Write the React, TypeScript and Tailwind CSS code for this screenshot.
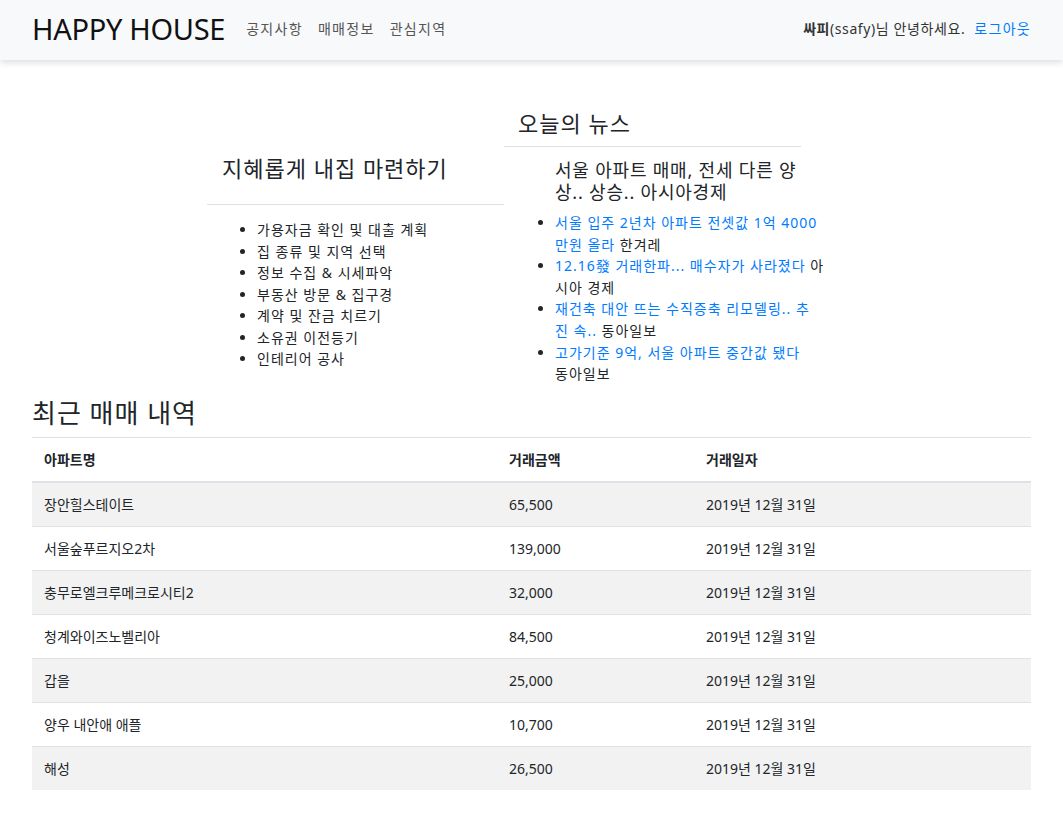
const guide = [
  "가용자금 확인 및 대출 계획",
  "집 종류 및 지역 선택",
  "정보 수집 & 시세파악",
  "부동산 방문 & 집구경",
  "계약 및 잔금 치르기",
  "소유권 이전등기",
  "인테리어 공사",
];

// lines split the way the original wraps them
const news = [
  { title: ["서울 입주 2년차 아파트 전셋값 1억 4000", "만원 올라"], press: "한겨레", pressNewLine: false },
  { title: ["12.16發 거래한파... 매수자가 사라졌다"], press: "아|시아 경제", pressNewLine: false },
  { title: ["재건축 대안 뜨는 수직증축 리모델링.. 추", "진 속.."], press: "동아일보", pressNewLine: false },
  { title: ["고가기준 9억, 서울 아파트 중간값 됐다"], press: "동아일보", pressNewLine: true },
];

const deals = [
  { name: "장안힐스테이트", price: "65,500" },
  { name: "서울숲푸르지오2차", price: "139,000" },
  { name: "충무로엘크루메크로시티2", price: "32,000" },
  { name: "청계와이즈노벨리아", price: "84,500" },
  { name: "갑을", price: "25,000" },
  { name: "양우 내안애 애플", price: "10,700" },
  { name: "해성", price: "26,500" },
];

const NewsItem = ({ item }: { item: (typeof news)[number] }) => {
  const press = item.press.split("|");
  return (
    <li>
      <a className="text-[#007bff]">
        {item.title[0]}
        {item.title[1] && (
          <>
            <br />
            {item.title[1]}
          </>
        )}
      </a>
      {item.pressNewLine ? <br /> : " "}
      {press[0]}
      {press[1] && (
        <>
          <br />
          {press[1]}
        </>
      )}
    </li>
  );
};

const App = () => {
  return (
    <div
      className="min-h-screen bg-white text-[#212529] text-[14px]"
      style={{ fontFamily: '"Noto Sans", "Noto Sans CJK KR", sans-serif' }}
    >
      {/* navbar */}
      <nav className="h-[60px] bg-[#f8f9fa] shadow-[0_3px_6px_rgba(0,0,0,0.12)] px-8 pb-[4px] flex items-center">
        <h1 className="text-[29px] leading-none text-[#111] mr-[21px] tracking-[-0.3px]">HAPPY HOUSE</h1>
        <div className="flex gap-[15px] text-[#555] text-[14px] tracking-[1.3px]">
          <a>공지사항</a>
          <a>매매정보</a>
          <a>관심지역</a>
        </div>
        <div className="ml-auto flex items-center text-[#333]">
          <span className="font-bold tracking-[0.5px]">싸피</span>
          <span className="tracking-[0.6px]">(ssafy)님 안녕하세요.</span>
          <a className="ml-[9px] text-[#007bff] tracking-[1.3px]">로그아웃</a>
        </div>
      </nav>

      {/* guide + news */}
      <div className="flex pl-[207px] tracking-[1px]">
        <div className="w-[297px] mt-[95px]">
          <h3 className="text-[22px] leading-[26px] pl-[15px]">지혜롭게 내집 마련하기</h3>
          <hr className="mt-[23px] border-[#dee2e6]" />
          <ul className="list-disc pl-[50px] mt-[14px] leading-[21.5px]">
            {guide.map((g) => (
              <li key={g}>{g}</li>
            ))}
          </ul>
        </div>
        <div className="w-[297px] mt-[50px]">
          <h3 className="text-[22px] leading-[26px] pl-[14px]">오늘의 뉴스</h3>
          <hr className="mt-[10px] border-[#dee2e6]" />
          <div className="pl-[51px] mt-[12px] text-[18px] leading-[22px] whitespace-nowrap tracking-[0.8px]">
            서울 아파트 매매, 전세 다른 양
            <br />
            상.. 상승.. 아시아경제
          </div>
          <ul className="list-disc pl-[51px] mt-[9px] leading-[21.6px] whitespace-nowrap">
            {news.map((n) => (
              <NewsItem key={n.title[0]} item={n} />
            ))}
          </ul>
        </div>
      </div>

      {/* recent deals */}
      <div className="px-8 mt-[13px]">
        <h2 className="text-[26px] leading-[31px] mb-[8px] tracking-[1px]">최근 매매 내역</h2>
        <table className="w-full border-collapse">
          <thead>
            <tr className="border-t border-[#dee2e6] border-b-2">
              <th className="w-[465px] h-[45px] px-3 text-left font-bold">아파트명</th>
              <th className="w-[197px] px-3 text-left font-bold">거래금액</th>
              <th className="px-3 text-left font-bold">거래일자</th>
            </tr>
          </thead>
          <tbody>
            {deals.map((d, i) => (
              <tr
                key={d.name}
                className={
                  i % 2 === 0
                    ? "bg-[#f2f2f2] border-t border-[#dee2e6]"
                    : "bg-white border-t border-[#dee2e6]"
                }
              >
                <td className="h-[44px] px-3">{d.name}</td>
                <td className="px-3">{d.price}</td>
                <td className="px-3">2019년 12월 31일</td>
              </tr>
            ))}
          </tbody>
        </table>
      </div>
    </div>
  );
};

export default App;
